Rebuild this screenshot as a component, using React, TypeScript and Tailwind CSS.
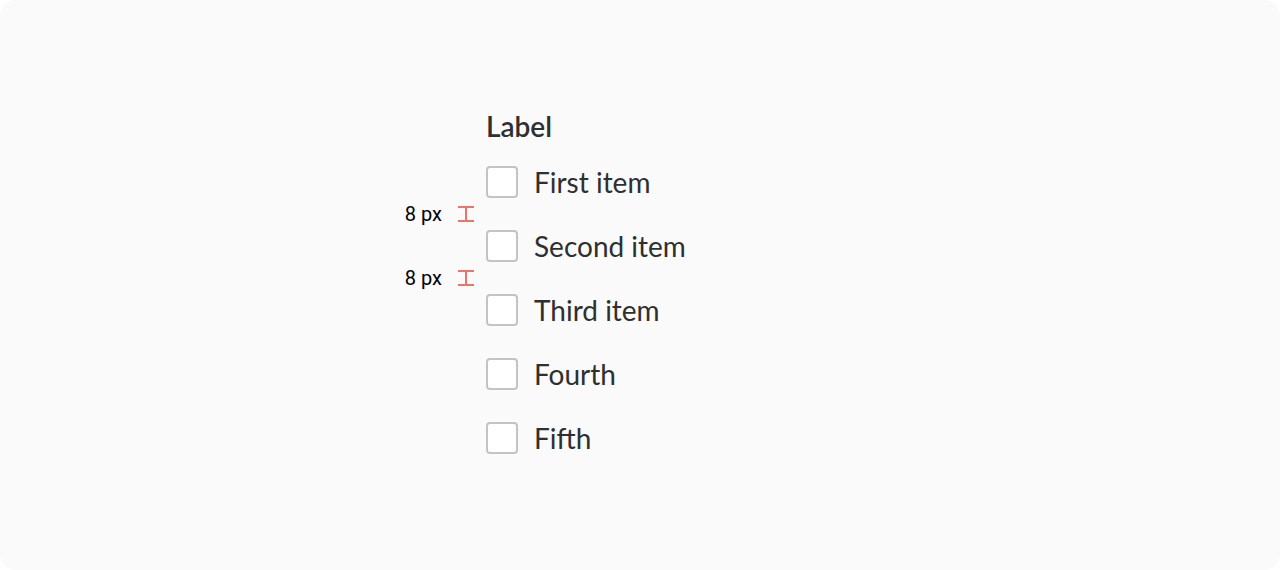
import { Fragment } from 'react';

const items = [
  { id: 'first', label: 'First item' },
  { id: 'second', label: 'Second item', gapBefore: '8 px' },
  { id: 'third', label: 'Third item', gapBefore: '8 px' },
  { id: 'fourth', label: 'Fourth' },
  { id: 'fifth', label: 'Fifth' },
];

function Gap({ text }: { text?: string }) {
  return (
    <div className="col-span-full grid h-8 grid-cols-subgrid">
      {text && (
        <div className="flex items-center justify-end gap-4 pr-3 font-[Roboto,sans-serif] text-xl leading-8 text-black">
          <span>{text}</span>
          <svg width="16" height="16" viewBox="0 0 16 16" fill="#ec7469" aria-hidden="true">
            <path d="M0 0H16V2H9V14H16V16H0V14H7V2H0Z" />
          </svg>
        </div>
      )}
    </div>
  );
}

export default function App() {
  return (
    <main className="min-h-screen bg-white">
      <div className="min-h-screen rounded-2xl bg-[#fafafa] px-4 pt-[110px] pb-16 font-[Lato,sans-serif] text-[28px] leading-8 text-[#2f2f2f]">
        <div
          role="group"
          aria-labelledby="group-label"
          className="grid grid-cols-[1fr_308px_1fr]"
        >
          <h2 id="group-label" className="col-start-2 mb-6 font-semibold">
            Label
          </h2>
          {items.map((item, index) => (
            <Fragment key={item.id}>
              {index > 0 && <Gap text={item.gapBefore} />}
              <div className="col-start-2 flex items-center gap-4">
                <input
                  id={item.id}
                  type="checkbox"
                  className="size-8 shrink-0 appearance-none rounded border-2 border-[#c3c3c3] bg-white checked:bg-[#c3c3c3]"
                />
                <label htmlFor={item.id}>{item.label}</label>
              </div>
            </Fragment>
          ))}
        </div>
      </div>
    </main>
  );
}
